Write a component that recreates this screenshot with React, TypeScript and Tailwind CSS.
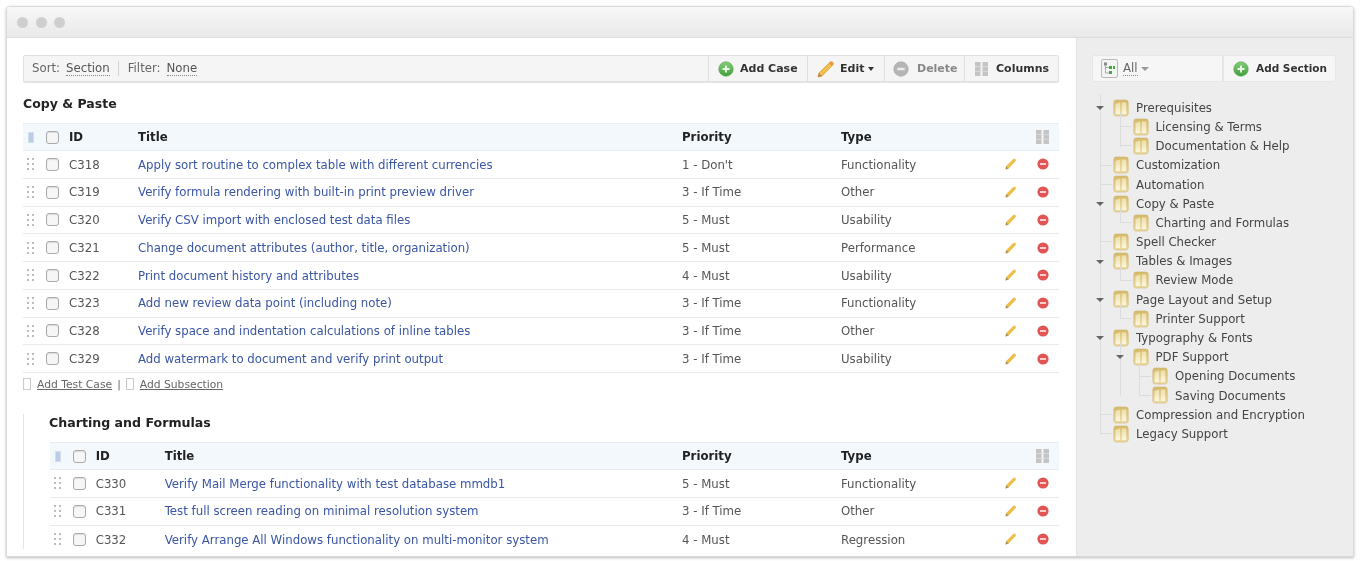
import React from "react";

const Plus = () => (
  <svg width="16" height="16" viewBox="0 0 17 17" className="shrink-0">
    <defs>
      <linearGradient id="g1" x1="0" y1="0" x2="0" y2="1">
        <stop offset="0" stopColor="#86cf78" />
        <stop offset="1" stopColor="#3f9f3a" />
      </linearGradient>
    </defs>
    <circle cx="8.5" cy="8.5" r="7.7" fill="url(#g1)" stroke="#4e9e48" strokeWidth="0.6" />
    <path d="M8.5 4.8v7.4M4.8 8.5h7.4" stroke="#eef8ea" strokeWidth="2" />
  </svg>
);

const Pencil = ({ s = 20 }: { s?: number }) => (
  <svg width={s} height={s} viewBox="0 0 20 20" className="shrink-0">
    <path d="M3 14 14 3.2c.8-.8 2-.7 2.7.1.8.8.8 1.9 0 2.7L6 17l-4 1z" fill="#f1c04f" stroke="#d99b2e" strokeWidth="0.8" />
    <path d="M14 3.2c.8-.8 2-.7 2.7.1.8.8.8 1.9 0 2.7l-1 1L13 4.2z" fill="#e89a4a" />
    <path d="M3 14l3 3-4 1z" fill="#b98a55" />
  </svg>
);

const SmallPencil = () => (
  <svg width="12" height="12" viewBox="0 0 12 12" className="shrink-0">
    <path d="M1 8.2 8.2 1c.6-.5 1.6-.5 2.2.1.6.6.7 1.5.2 2.1L3.6 10.6 0.6 11.4z" fill="#edc04e" />
    <path d="M1 8.2l2.6 2.4-3 .8z" fill="#a88b5f" />
  </svg>
);

const Minus = ({ c = "#e25555", s = 12 }: { c?: string; s?: number }) => (
  <svg width={s} height={s} viewBox="0 0 12 12" className="shrink-0">
    <circle cx="6" cy="6" r="5.6" fill={c} />
    <path d="M3 6h6" stroke="#fff" strokeWidth="1.6" opacity="0.9" />
  </svg>
);

const GreyMinus = () => (
  <svg width="16" height="16" viewBox="0 0 17 17" className="shrink-0">
    <circle cx="8.5" cy="8.5" r="7.7" fill="#b5b5b5" stroke="#a2a2a2" strokeWidth="0.6" />
    <path d="M4.5 8.5h8" stroke="#ececec" strokeWidth="2.4" />
  </svg>
);

const Cols = () => (
  <svg width="13" height="14" viewBox="0 0 13 14" className="shrink-0">
    <rect x="0" y="0" width="5.5" height="14" fill="#c4c4c4" />
    <rect x="7.5" y="0" width="5.5" height="14" fill="#c4c4c4" />
    <path d="M0 4.6h13M0 9.3h13" stroke="#e4e4e4" strokeWidth="0.7" />
  </svg>
);

const Handle = () => (
  <svg width="8" height="12" viewBox="0 0 8 12">
    {[1, 6, 11].map((y) =>
      [1, 6].map((x) => <rect key={`${x}${y}`} x={x - 1} y={y - 1} width="2" height="2" fill="#bdbdbd" />)
    )}
  </svg>
);

const Check = () => (
  <span className="block w-[13px] h-[13px] rounded-[3px] border border-[#aaaaaa] bg-[#f6f6f6] shadow-[inset_0_1px_1px_#ddd]" />
);

const Folder = () => (
  <svg width="16" height="18" viewBox="0 0 16 18" className="shrink-0">
    <defs>
      <linearGradient id="f1" x1="0" y1="0" x2="0" y2="1">
        <stop offset="0" stopColor="#d6b968" />
        <stop offset="1" stopColor="#ecdca6" />
      </linearGradient>
      <linearGradient id="f2" x1="0" y1="0" x2="0" y2="1">
        <stop offset="0" stopColor="#eddfa9" />
        <stop offset="1" stopColor="#fbf6df" />
      </linearGradient>
    </defs>
    <rect x="0.8" y="1" width="14.4" height="16" rx="2.4" fill="url(#f1)" stroke="#d0b671" strokeWidth="0.6" />
    <path d="M2.6 5 7.2 3.4V15H3.2c-.4 0-.6-.2-.6-.6z" fill="url(#f2)" />
    <path d="M8.8 3.6h3.8c.4 0 .6.2.6.6v10.2c0 .4-.2.6-.6.6H8.8z" fill="url(#f2)" />
  </svg>
);

const TreeIcon = () => (
  <svg width="17" height="19" viewBox="0 0 17 19" className="shrink-0">
    <rect x="0.5" y="0.5" width="16" height="18" rx="1.5" fill="#f4f4f4" stroke="#b9b9b9" />
    <rect x="3" y="3.5" width="3" height="3" fill="#8a8a8a" />
    <rect x="8" y="7" width="3" height="3" fill="#3fae3a" />
    <rect x="12" y="7" width="2" height="3" fill="#3fae3a" />
    <rect x="8" y="12" width="3" height="3" fill="#3fae3a" />
    <path d="M4.5 6.5V14H8M4.5 8.5H8" stroke="#9a9a9a" strokeWidth="0.8" fill="none" />
  </svg>
);

const Tool = ({ children, w }: { children: React.ReactNode; w: string }) => (
  <div className={`${w} h-full flex items-center border-l border-[#dedede] text-[11px] font-bold text-[#333]`}>
    {children}
  </div>
);

const Toolbar = () => (
  <div className="h-[27px] flex items-center bg-[#f5f5f5] border border-[#e0e0e0] rounded-[2px] shadow-[0_1px_1px_#e4e4e4]">
    <div className="flex-1 flex items-center pl-[8px] text-[11.75px] text-[#666]">
      <span>Sort:</span>
      <span className="ml-[6px] border-b border-dotted border-[#888] leading-[14px] text-[#555]">Section</span>
      <span className="ml-[8px] mr-[9px] w-px h-[15px] bg-[#d4d4d4]" />
      <span>Filter:</span>
      <span className="ml-[6px] border-b border-dotted border-[#888] leading-[14px] text-[#555]">None</span>
    </div>
    <Tool w="w-[99px] pl-[9px] gap-[6px]"><Plus /><span className="pt-px">Add Case</span></Tool>
    <Tool w="w-[77px] pl-[8px] gap-[4px]">
      <Pencil />
      <span className="pt-px">Edit</span>
      <span className="w-0 h-0 border-x-[3.5px] border-x-transparent border-t-[4px] border-t-[#333]" />
    </Tool>
    <Tool w="w-[80px] pl-[8px] gap-[8px]"><GreyMinus /><span className="pt-px text-[#888]">Delete</span></Tool>
    <Tool w="w-[94px] pl-[10px] gap-[8px]"><Cols /><span className="pt-px">Columns</span></Tool>
  </div>
);

type Row = [string, string, string, string];

const Table = ({ rows, open }: { rows: Row[]; open?: boolean }) => (
  <div className="text-[11.75px]">
    <div className="h-[28px] flex items-center bg-[#f3f8fd] border-y border-[#e6ecf2] font-bold text-[#222]">
      <span className="w-[23px] pl-[5px]">
        <span className="block w-[6px] h-[11px] bg-[#b9cdea] border border-[#d4dde8]" />
      </span>
      <span className="w-[23px]"><Check /></span>
      <span className="w-[69px] pt-px">ID</span>
      <span className="flex-1 pt-px">Title</span>
      <span className="w-[159px] pt-px">Priority</span>
      <span className="flex-1 max-w-[195px] pt-px">Type</span>
      <span className="w-[23px] flex justify-start"><Cols /></span>
    </div>
    {rows.map((r) => (
      <div
        key={r[0]}
        className={`h-[27.75px] flex items-center text-[#555] border-b border-[#e9e9e9] ${open ? "last:border-b-0" : ""}`}
      >
        <span className="w-[23px] pl-[4px] flex"><Handle /></span>
        <span className="w-[23px]"><Check /></span>
        <span className="w-[69px] pt-[2px]">{r[0]}</span>
        <span className="flex-1 pt-[2px] text-[#3a56a5]">{r[1]}</span>
        <span className="w-[159px] pt-[2px]">{r[2]}</span>
        <span className="w-[164px] pt-[2px]">{r[3]}</span>
        <span className="w-[32px] flex"><SmallPencil /></span>
        <span className="w-[22px] flex"><Minus /></span>
      </div>
    ))}
  </div>
);

const main: Row[] = [
  ["C318", "Apply sort routine to complex table with different currencies", "1 - Don't", "Functionality"],
  ["C319", "Verify formula rendering with built-in print preview driver", "3 - If Time", "Other"],
  ["C320", "Verify CSV import with enclosed test data files", "5 - Must", "Usability"],
  ["C321", "Change document attributes (author, title, organization)", "5 - Must", "Performance"],
  ["C322", "Print document history and attributes", "4 - Must", "Usability"],
  ["C323", "Add new review data point (including note)", "3 - If Time", "Functionality"],
  ["C328", "Verify space and indentation calculations of inline tables", "3 - If Time", "Other"],
  ["C329", "Add watermark to document and verify print output", "3 - If Time", "Usability"],
];

const sub: Row[] = [
  ["C330", "Verify Mail Merge functionality with test database mmdb1", "5 - Must", "Functionality"],
  ["C331", "Test full screen reading on minimal resolution system", "3 - If Time", "Other"],
  ["C332", "Verify Arrange All Windows functionality on multi-monitor system", "4 - Must", "Regression"],
];

const Doc = () => (
  <span className="inline-block w-[8px] h-[12px] -mt-[3px] border border-[#cccccc] bg-white" />
);

type Node = { t: string; k?: Node[] };

const tree: Node[] = [
  { t: "Prerequisites", k: [{ t: "Licensing & Terms" }, { t: "Documentation & Help" }] },
  { t: "Customization" },
  { t: "Automation" },
  { t: "Copy & Paste", k: [{ t: "Charting and Formulas" }] },
  { t: "Spell Checker" },
  { t: "Tables & Images", k: [{ t: "Review Mode" }] },
  { t: "Page Layout and Setup", k: [{ t: "Printer Support" }] },
  {
    t: "Typography & Fonts",
    k: [{ t: "PDF Support", k: [{ t: "Opening Documents" }, { t: "Saving Documents" }] }],
  },
  { t: "Compression and Encryption" },
  { t: "Legacy Support" },
];

const Branch = ({ nodes }: { nodes: Node[] }) => (
  <div className="relative">
    <span className="absolute left-[8px] top-[-4px] bottom-[9px] w-px bg-[#dcdcdc]" />
    {nodes.map((n) => (
      <div key={n.t}>
        <div className="relative h-[19.2px] flex items-center pl-[21px] text-[11.75px] text-[#444]">
          {n.k ? (
            <span className="absolute left-[4px] top-[8px] w-0 h-0 border-x-[4px] border-x-transparent border-t-[4px] border-t-[#666]" />
          ) : (
            <span className="absolute left-[9px] top-[9px] w-[11px] h-px bg-[#dcdcdc]" />
          )}
          <Folder />
          <span className="ml-[7px] pt-[2px] whitespace-nowrap">{n.t}</span>
        </div>
        {n.k && (
          <div className="ml-[19.5px]">
            <Branch nodes={n.k} />
          </div>
        )}
      </div>
    ))}
  </div>
);

export default function App() {
  return (
    <div className="font-[DejaVu_Sans,sans-serif] h-[561px] overflow-hidden bg-white pt-[6px] px-[6px] [filter:blur(0.45px)]">
      <div className="h-[551px] w-[1348px] border border-[#d9d9d9] rounded-t-[4px] shadow-[0_1px_3px_#bbb] flex flex-col overflow-hidden">
        <div className="h-[31px] shrink-0 flex items-center gap-[7.5px] pl-[10px] bg-gradient-to-b from-[#f8f8f8] to-[#e9e9e9] border-b border-[#dcdcdc]">
          <span className="w-[11px] h-[11px] rounded-full bg-[#cfcfcf]" />
          <span className="w-[11px] h-[11px] rounded-full bg-[#cfcfcf]" />
          <span className="w-[11px] h-[11px] rounded-full bg-[#cfcfcf]" />
        </div>
        <div className="flex-1 flex min-h-0">
          <div className="w-[1069px] shrink-0 pl-[16px] pr-[17px] pt-[17px] bg-white overflow-hidden">
            <Toolbar />
            <h2 className="mt-[13px] h-[17px] leading-[17px] text-[12.5px] font-bold text-[#222]">Copy &amp; Paste</h2>
            <div className="mt-[11px]">
              <Table rows={main} />
            </div>
            <div className="h-[22px] flex items-center text-[10.75px] text-[#666] pt-[2px]">
              <Doc />
              <span className="ml-[6px] underline">Add Test Case</span>
              <span className="mx-[5px]">|</span>
              <Doc />
              <span className="ml-[6px] underline">Add Subsection</span>
            </div>
            <div className="mt-[23px] h-[135px] border-l border-[#e4e4e4] pl-[25.7px]">
              <h2 className="h-[17px] leading-[17px] text-[12.6px] font-bold text-[#222] -mt-[4px] -ml-[0.7px]">Charting and Formulas</h2>
              <div className="mt-[11px]">
                <Table rows={sub} open />
              </div>
            </div>
          </div>
          <div className="flex-1 bg-[#ededed] border-l border-[#e2e2e2] pl-[15px] pr-[17px] pt-[17px]">
            <div className="h-[27px] flex items-center bg-[#f6f6f6] border border-[#e6e6e6] rounded-[2px] text-[11.75px]">
              <div className="w-[129px] h-full flex items-center pl-[8px] text-[#666]">
                <TreeIcon />
                <span className="ml-[5px] border-b border-dotted border-[#888] leading-[14px]">All</span>
                <span className="ml-[3px] w-0 h-0 border-x-[4px] border-x-transparent border-t-[4px] border-t-[#999]" />
              </div>
              <div className="flex-1 h-full flex items-center pl-[9px] gap-[7px] border-l-2 border-[#e6e6e6] text-[10.5px] font-bold text-[#333]">
                <Plus />
                <span className="pt-px">Add Section</span>
              </div>
            </div>
            <div className="mt-[16px]">
              <Branch nodes={tree} />
            </div>
          </div>
        </div>
      </div>
    </div>
  );
}
